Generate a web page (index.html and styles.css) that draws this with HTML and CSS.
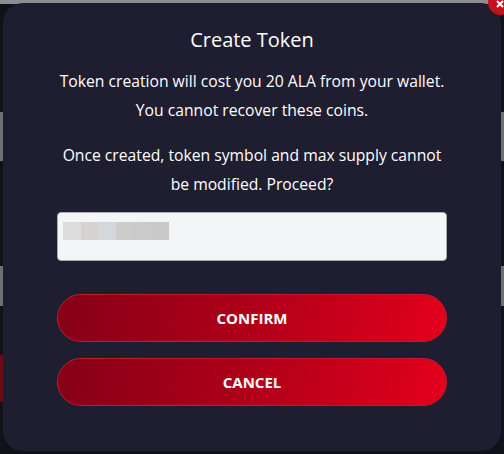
FILE: index.html
```html
<!DOCTYPE html>
<html>
<head>
<meta charset="utf-8">
<link rel="stylesheet" href="styles.css">
</head>
<body>
<div class="backdrop">
  <div class="topbar"></div>
  <div class="strip gray s1"></div>
  <div class="strip gray s2"></div>
  <div class="strip red s3"></div>
</div>
<div class="modal">
  <h1 class="title">Create Token</h1>
  <p class="text">Token creation will cost you 20 ALA from your wallet.<br>You cannot recover these coins.</p>
  <p class="text second">Once created, token symbol and max supply cannot<br>be modified. Proceed?</p>
  <div class="input"><span class="blur"><i class="b1"></i><i class="b2"></i><i class="b3"></i><i class="b4"></i><i class="b5"></i><i class="b6"></i></span></div>
  <button class="btn first">CONFIRM</button>
  <button class="btn">CANCEL</button>
</div>
<div class="close">
  <svg width="8" height="8" viewBox="0 0 8 8"><path d="M1 1L7 7M7 1L1 7" stroke="#fff" stroke-width="2"/></svg>
</div>
</body>
</html>
```
FILE: styles.css
```css
html, body {
  margin: 0;
  padding: 0;
  width: 504px;
  height: 454px;
  overflow: hidden;
  background: #111118;
  font-family: "Open Sans", "Noto Sans", sans-serif;
}
.backdrop {
  position: relative;
  width: 504px;
  height: 454px;
  display: flex;
  flex-direction: column;
}
.topbar {
  height: 4px;
  background: #8d8e91;
}
.strip {
  width: 504px;
  display: flex;
}
.gray { background: linear-gradient(90deg, #6f7074 0 4px, transparent 4px 500px, #6f7074 500px); }
.red { background: linear-gradient(90deg, #6e0912 0 4px, transparent 4px); }
.s1 { height: 49px; margin-top: 108px; }
.s2 { height: 40px; margin-top: 105px; }
.s3 { height: 47px; margin-top: 49px; }
.modal {
  position: absolute;
  left: 3px;
  top: 3px;
  width: 498px;
  height: 448px;
  box-sizing: border-box;
  background: #1f1e31;
  border-radius: 20px;
  padding: 24px 54px 0;
  display: flex;
  flex-direction: column;
  align-items: stretch;
  color: #fff;
  text-align: center;
}
.title {
  margin: 0;
  font-size: 20px;
  font-weight: 400;
  line-height: 26px;
}
.text {
  margin: 14px 0 0;
  font-size: 15.7px;
  line-height: 29px;
  white-space: nowrap;
}
.text.second {
  margin-top: 16px;
}
.input {
  margin-top: 13px;
  height: 49px;
  box-sizing: border-box;
  background: #f4f5f7;
  border: 1px solid #a9abb0;
  border-radius: 4px;
  display: flex;
  align-items: flex-start;
  padding: 9px 5px;
}
.blur {
  display: flex;
  height: 18px;
}
.blur i { display: block; height: 18px; }
.b1 { width: 18px; background: #dcdcdd; }
.b2 { width: 17px; background: #d6d2d0; }
.b3 { width: 18px; background: #d2d8db; }
.b4 { width: 18px; background: #cccccb; }
.b5 { width: 17px; background: #cbcbcb; }
.b6 { width: 18px; background: #c9c9ca; }
.btn {
  height: 48px;
  margin-top: 16px;
  border: 1px solid #c21a2a;
  border-radius: 24px;
  background: linear-gradient(100deg, #850016 0%, #b00019 50%, #e3001d 100%);
  color: #fff;
  font-family: "Open Sans", "Noto Sans", sans-serif;
  font-weight: 700;
  font-size: 15px;
  letter-spacing: 0;
  cursor: pointer;
}
.btn.first { margin-top: 33px; }
.close {
  position: absolute;
  left: 488px;
  top: -10px;
  width: 25px;
  height: 25px;
  border-radius: 50%;
  background: #c4111d;
  display: flex;
  align-items: flex-end;
  justify-content: flex-start;
  padding: 0;
}
.close svg {
  margin: 0 0 7px 8px;
}
```
